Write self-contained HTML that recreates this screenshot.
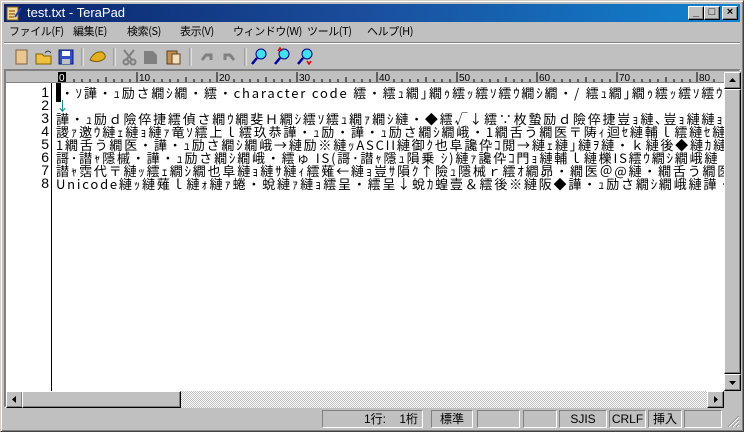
<!DOCTYPE html>
<html><head><meta charset="utf-8"><style>
*{margin:0;padding:0;box-sizing:border-box}
body{width:744px;height:432px;background:#c0c0c0;position:relative;overflow:hidden;font-family:"Liberation Sans","Noto Sans CJK JP",sans-serif;font-size:12px}
.abs{position:absolute}
#frame{left:0;top:0;width:744px;height:432px;border:1px solid;border-color:#d4d0c8 #404040 #404040 #d4d0c8;box-shadow:inset 1px 1px #fff,inset -1px -1px #808080}
#title{left:4px;top:4px;width:736px;height:18px;background:linear-gradient(90deg,#0a246a 0%,#1a4f9e 50%,#1084d0 100%);color:#fff;font-size:13px;line-height:18px;padding-left:23px}
.tb{top:6px;width:16px;height:14px;background:#c0c0c0;border:1px solid;border-color:#fff #000 #000 #fff;box-shadow:inset -1px -1px #808080;font-size:11px;font-weight:bold;line-height:11px;text-align:center;color:#000}
.m{top:22px;height:19px;line-height:19px;font-size:11px;letter-spacing:-0.4px;color:#000;font-family:"Noto Sans CJK JP",sans-serif;white-space:nowrap}
#edit{left:4px;top:69px;width:737px;height:339px;border:2px solid;border-color:#808080 #fff #fff #808080;box-shadow:inset 1px 1px #404040}
#ruler{left:6px;top:71px;width:718px;height:12px;background:#c0c0c0;border-bottom:1px solid #808080;overflow:hidden}
#text{left:6px;top:83px;width:718px;height:308px;background:#fff;overflow:hidden}
#nums{left:0;top:3px;width:43px;text-align:right;font-size:14px;line-height:13px;color:#000;font-family:"Liberation Sans Narrow","Liberation Sans",sans-serif}
#vl{left:45px;top:0;width:1px;height:308px;background:#000}
#lines{left:50px;top:3px;white-space:pre;font-size:13px;line-height:13px;letter-spacing:1.8px;color:#000;font-family:"Noto Sans CJK JP","WenQuanYi Zen Hei",sans-serif}
.btn{background:#c0c0c0;border:1px solid;border-color:#fff #000 #000 #fff;box-shadow:inset -1px -1px #808080;position:absolute}
.pane{top:410px;height:18px;border:1px solid;border-color:#808080 #fff #fff #808080;font-size:12px;line-height:16px;text-align:center}
</style></head><body>
<div id="frame" class="abs"></div>
<div id="title" class="abs">test.txt - TeraPad</div>
<svg class="abs" style="left:6px;top:5px" width="16" height="16"><rect x="1" y="2" width="11" height="13" fill="#f0d890" stroke="#806020"/><path d="M3 6h6M3 9h6M3 12h5" stroke="#804000"/><path d="M9 12L15 3" stroke="#2040c0" stroke-width="2"/></svg>
<div class="abs tb" style="left:688px">_</div>
<div class="abs tb" style="left:704px">□</div>
<div class="abs tb" style="left:722px">×</div>
<div class="abs m" style="left:9px">ファイル(F)</div>
<div class="abs m" style="left:73px">編集(E)</div>
<div class="abs m" style="left:127px">検索(S)</div>
<div class="abs m" style="left:180px">表示(V)</div>
<div class="abs m" style="left:233px">ウィンドウ(W)</div>
<div class="abs m" style="left:307px">ツール(T)</div>
<div class="abs m" style="left:367px">ヘルプ(H)</div>
<div class="abs" style="left:4px;top:42px;width:736px;height:2px;border-top:1px solid #808080;border-bottom:1px solid #fff"></div>
<svg class="abs" style="left:0;top:44px" width="330" height="26">
<rect x="16" y="6" width="11" height="14" fill="#e8c890" stroke="#806040"/>
<path d="M36 10h6l2 2h7v8h-15z" fill="#f0c040" stroke="#806000"/><path d="M45 9q3-4 6 0" stroke="#404040" fill="none"/>
<rect x="59" y="6" width="14" height="14" fill="#3050c0" stroke="#002080"/><rect x="62" y="7" width="8" height="5" fill="#fff"/><rect x="62" y="15" width="8" height="5" fill="#c0c0c0"/>
<line x1="82" y1="4" x2="82" y2="22" stroke="#808080"/><line x1="83" y1="4" x2="83" y2="22" stroke="#fff"/>
<path d="M90 16q4-9 12-8q4 2 3 6q-6 6-15 2z" fill="#e0b020" stroke="#806000"/>
<line x1="114" y1="4" x2="114" y2="22" stroke="#808080"/><line x1="115" y1="4" x2="115" y2="22" stroke="#fff"/>
<path d="M124 6l8 10M134 6l-8 10" stroke="#808080" stroke-width="2"/><circle cx="126" cy="18" r="2.5" fill="none" stroke="#808080" stroke-width="2"/><circle cx="133" cy="18" r="2.5" fill="none" stroke="#808080" stroke-width="2"/>
<path d="M144 7h9l4 4v9h-13z" fill="#808080"/>
<rect x="167" y="7" width="10" height="13" fill="#c09050" stroke="#604020"/><rect x="172" y="10" width="8" height="10" fill="#f0e0c0" stroke="#604020"/>
<line x1="190" y1="4" x2="190" y2="22" stroke="#808080"/><line x1="191" y1="4" x2="191" y2="22" stroke="#fff"/>
<path d="M202 16l4-5h5v5" stroke="#808080" stroke-width="3" fill="none"/><path d="M234 16l-4-5h-5v5" stroke="#808080" stroke-width="3" fill="none"/>
<line x1="245" y1="4" x2="245" y2="22" stroke="#808080"/><line x1="246" y1="4" x2="246" y2="22" stroke="#fff"/>
<circle cx="261" cy="10" r="5" fill="#40e0f0" stroke="#000080"/><path d="M257 14l-5 6" stroke="#0000a0" stroke-width="2.5"/>
<circle cx="284" cy="10" r="5" fill="#40e0f0" stroke="#000080"/><path d="M280 14l-5 6" stroke="#0000a0" stroke-width="2.5"/><path d="M278 7l2-3 2 3" stroke="#e00000" fill="none" stroke-width="1.5"/>
<circle cx="307" cy="10" r="5" fill="#40e0f0" stroke="#000080"/><path d="M303 14l-5 6" stroke="#0000a0" stroke-width="2.5"/><path d="M307 17l2 3 2-3" stroke="#e00000" fill="none" stroke-width="1.5"/>
</svg>
<div id="edit" class="abs"></div>
<div id="ruler" class="abs"><svg width="718" height="12" font-family="Liberation Sans" font-size="10">
<rect x="52" y="1" width="8" height="11" fill="#000"/><text x="53" y="10" fill="#fff">0</text>
<g stroke="#000"><path d="M131 1v11M211 1v11M291 1v11M371 1v11M451 1v11M531 1v11M611 1v11M691 1v11"/>
<path d="M68 8v4M76 8v4M84 8v4M92 8v4M100 6v6M108 8v4M116 8v4M124 8v4M148 8v4M156 8v4M164 8v4M172 8v4M180 6v6M188 8v4M196 8v4M204 8v4M228 8v4M236 8v4M244 8v4M252 8v4M260 6v6M268 8v4M276 8v4M284 8v4M308 8v4M316 8v4M324 8v4M332 8v4M340 6v6M348 8v4M356 8v4M364 8v4M388 8v4M396 8v4M404 8v4M412 8v4M420 6v6M428 8v4M436 8v4M444 8v4M468 8v4M476 8v4M484 8v4M492 8v4M500 6v6M508 8v4M516 8v4M524 8v4M548 8v4M556 8v4M564 8v4M572 8v4M580 6v6M588 8v4M596 8v4M604 8v4M628 8v4M636 8v4M644 8v4M652 8v4M660 6v6M668 8v4M676 8v4M684 8v4M708 8v4"/></g>
<g fill="#000"><text x="133" y="10">10</text><text x="213" y="10">20</text><text x="293" y="10">30</text><text x="373" y="10">40</text><text x="453" y="10">50</text><text x="533" y="10">60</text><text x="613" y="10">70</text><text x="693" y="10">80</text></g></svg></div>
<div id="text" class="abs">
<div id="nums" class="abs">1<br>2<br>3<br>4<br>5<br>6<br>7<br>8</div>
<div id="vl" class="abs"></div>
<div id="lines" class="abs"><span style="background:#000">&nbsp;</span>・ｿ譁・ｭ励さ繝ｼ繝・繧・character code 繧・繧ｭ繝｣繝ｩ繧ｯ繧ｿ繧ｳ繝ｼ繝・/ 繧ｭ繝｣繝ｩ繧ｯ繧ｿ繧ｳ繝ｼ繝
<span style="color:#008080">↓</span>
譁・ｭ励ｄ險倅捷繧偵さ繝ｳ繝斐Ｈ繝ｼ繧ｿ繧ｭ繝ｧ繝ｼ縺・◆繧√↓繧∵枚蟄励ｄ險倅捷豈ｮ縺､豈ｮ縺縺ｮ譁・ｭ
謖ｧ邀ｳ縺ｪ縺ｮ縺ｧ竜ｿ繧上ｌ繧玖恭譁・ｭ励・譁・ｭ励さ繝ｼ繝峨・1繝舌う繝医〒陦ｨ迴ｾ縺輔ｌ繧縺ｾ縺
1繝舌う繝医・譁・ｭ励さ繝ｼ繝峨→縺励※縺ｯASCII縺御ｸ也阜讒伜ｺ閲→縺ｪ縺｣縺ｦ縺・ｋ縺後◆縺ｶ縺
謌･譛ｬ隱槭・譁・ｭ励さ繝ｼ繝峨・繧ゅ IS(謌･譛ｬ隱ｭ隕乗 ｼ)縺ｧ讒伜ｺ門ｮ縺輔ｌ縺櫟IS繧ｳ繝ｼ繝峨縺
譛ｬ霑代〒縺ｯ繧ｪ繝ｼ繝也阜縺ｮ縺ｻ縺ｨ繧薙←縺ｮ豈ｻ隕ｸ↑險ｭ隱械ｒ繧ｵ繝昴・繝医＠@縺・繝舌う繝医〒
Unicode縺ｯ縺薙ｌ縺ｫ縺ｧ蜷・蛻縺ｧ縺ｮ繧呈・繧呈↓蛻ｶ蝗壹＆繧後※縺阪◆譁・ｭ励さ繝ｼ繝峨縺譁・ｭ励縺
</div></div>
<div class="abs" style="left:724px;top:71px;width:17px;height:320px;background:#c0c0c0"></div>
<div class="btn" style="left:724px;top:72px;width:17px;height:17px"><svg width="15" height="15"><path d="M4 9h7L7.5 5z" fill="#000"/></svg></div>
<div class="btn" style="left:724px;top:89px;width:17px;height:285px"></div>
<div class="btn" style="left:724px;top:374px;width:17px;height:17px"><svg width="15" height="15"><path d="M4 6h7L7.5 10z" fill="#000"/></svg></div>
<div class="abs" style="left:6px;top:391px;width:718px;height:17px;background-color:#e0e0e0;background-image:repeating-conic-gradient(#c0c0c0 0 25%,#fff 0 50%);background-size:2px 2px"></div>
<div class="btn" style="left:6px;top:391px;width:17px;height:17px"><svg width="15" height="15"><path d="M9 4v7L5 7.5z" fill="#000"/></svg></div>
<div class="btn" style="left:22px;top:391px;width:159px;height:17px"></div>
<div class="btn" style="left:707px;top:391px;width:17px;height:17px"><svg width="15" height="15"><path d="M6 4v7L10 7.5z" fill="#000"/></svg></div>
<div class="abs" style="left:724px;top:391px;width:17px;height:17px;background:#c0c0c0"></div>
<div class="pane abs" style="left:322px;width:101px;text-align:right;padding-right:4px">1行:&nbsp;&nbsp;&nbsp;&nbsp;1桁</div>
<div class="pane abs" style="left:431px;width:42px">標準</div>
<div class="pane abs" style="left:477px;width:43px"></div>
<div class="pane abs" style="left:523px;width:34px"></div>
<div class="pane abs" style="left:559px;width:48px">SJIS</div>
<div class="pane abs" style="left:609px;width:37px">CRLF</div>
<div class="pane abs" style="left:648px;width:34px">挿入</div>
<div class="pane abs" style="left:684px;width:38px"></div>
<svg class="abs" style="left:726px;top:414px" width="14" height="14"><path d="M13 2L2 13M13 6L6 13M13 10L10 13" stroke="#808080"/><path d="M13 3L3 13M13 7L7 13M13 11L11 13" stroke="#fff"/></svg>
</body></html>
